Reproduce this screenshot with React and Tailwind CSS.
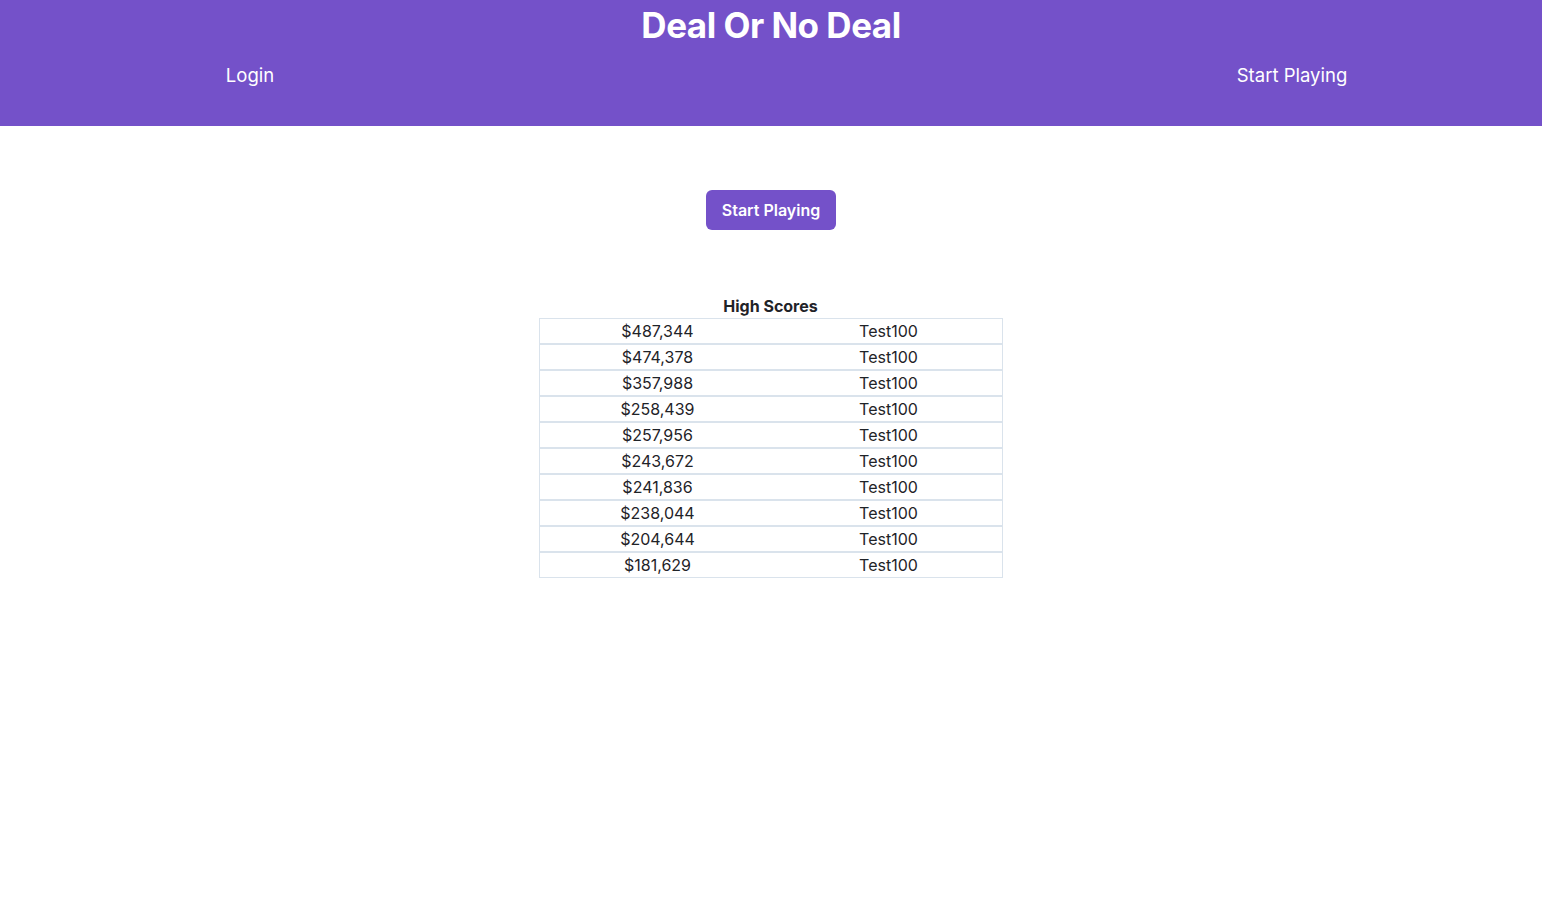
export default function App() {
  const scores = [
    ["$487,344", "Test100"],
    ["$474,378", "Test100"],
    ["$357,988", "Test100"],
    ["$258,439", "Test100"],
    ["$257,956", "Test100"],
    ["$243,672", "Test100"],
    ["$241,836", "Test100"],
    ["$238,044", "Test100"],
    ["$204,644", "Test100"],
    ["$181,629", "Test100"],
  ];
  return (
    <div className="min-h-screen bg-white text-[#1f2328]" style={{ fontFamily: "Inter, 'Noto Sans', sans-serif" }}>
      <header className="h-[126px] bg-[#7451c9] pt-[5px] text-white">
        <h1 className="text-center text-[35px] font-bold leading-10 tracking-[-0.5px]">Deal Or No Deal</h1>
        <nav className="mt-4 flex justify-between">
          <div className="w-[500px] text-center text-[18.5px] leading-7">Login</div>
          <div className="w-[500px] text-center text-[18.5px] leading-7">Start Playing</div>
        </nav>
      </header>
      <main className="flex flex-col items-center">
        <button className="mt-16 h-10 w-[130px] rounded-md bg-[#7451c9] text-base font-semibold text-white">
          Start Playing
        </button>
        <div className="mt-16 ml-[-1px] w-[464px]">
          <div className="text-center text-base font-bold leading-6">High Scores</div>
          {scores.map(([amt, name], i) => (
            <div key={i} className="flex h-[26px] border border-[#dae3ec] text-base leading-6">
              <div className="w-[236px] text-center">{amt}</div>
              <div className="flex-1 text-center">{name}</div>
            </div>
          ))}
        </div>
      </main>
    </div>
  );
}
